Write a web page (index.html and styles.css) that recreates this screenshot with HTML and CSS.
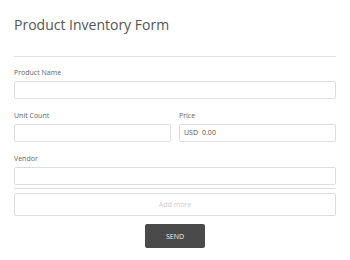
FILE: index.html
```html
<!DOCTYPE HTML>
<html lang="en">
  <head>
    <title>Product Inventory Form</title>
    <meta charset="utf-8">
    <link rel="stylesheet" href="styles.css">
  </head>
  <body>

  <div class="form">
    <h1 class="title">Product Inventory Form</h1>
    <div class="divider"></div>

    <div class="field">
      <label class="label">Product Name</label>
      <div class="input"></div>
    </div>

    <div class="row">
      <div class="field">
        <label class="label">Unit Count</label>
        <div class="input"></div>
      </div>
      <div class="field">
        <label class="label">Price</label>
        <div class="input"><span class="currency">USD</span>0.00</div>
      </div>
    </div>

    <div class="field">
      <label class="label">Vendor</label>
      <div class="input"></div>
    </div>

    <div class="separator"></div>
    <div class="add-more">Add more</div>

    <div class="actions">
      <button class="send">SEND</button>
    </div>
  </div>

  </body>
</html>
```

FILE: styles.css
```css
html {
  height: 100%;
}
body {
  margin: 0;
  padding: 0;
  background: #ffffff;
  color: #555555;
  font-family: "Open Sans", sans-serif;
}
.form {
  display: flex;
  flex-direction: column;
  padding: 15px 14px 0 14px;
}
.title {
  margin: 0;
  font-size: 14px;
  line-height: 20px;
  font-weight: normal;
  color: #555555;
}
.divider {
  height: 1px;
  background: #e0e0e0;
  margin: 21px 0 10px 0;
}
.field {
  display: flex;
  flex-direction: column;
  flex: 1;
  margin-bottom: 11px;
}
.label {
  font-size: 7px;
  line-height: 10px;
  color: #666666;
  padding-top: 1px;
  margin-bottom: 3px;
}
.input {
  height: 18px;
  box-sizing: border-box;
  border: 1px solid #dddddd;
  border-radius: 2px;
  font-size: 7px;
  line-height: 16px;
  padding: 0 4px;
  color: #555555;
}
.currency {
  margin-right: 4px;
}
.row {
  display: flex;
  gap: 8px;
}
.separator {
  height: 1px;
  background: #dddddd;
  margin: -8px 0 4px 0;
}
.add-more {
  height: 23px;
  box-sizing: border-box;
  border: 1px solid #dddddd;
  border-radius: 2px;
  font-size: 7px;
  line-height: 21px;
  text-align: center;
  color: #cccccc;
}
.actions {
  display: flex;
  justify-content: center;
  margin-top: 8px;
}
.send {
  width: 60px;
  height: 24px;
  border: none;
  border-radius: 2px;
  background: #4a4a4a;
  color: #eeeeee;
  font-family: "Open Sans", sans-serif;
  font-size: 7px;
  padding: 0;
}
```
